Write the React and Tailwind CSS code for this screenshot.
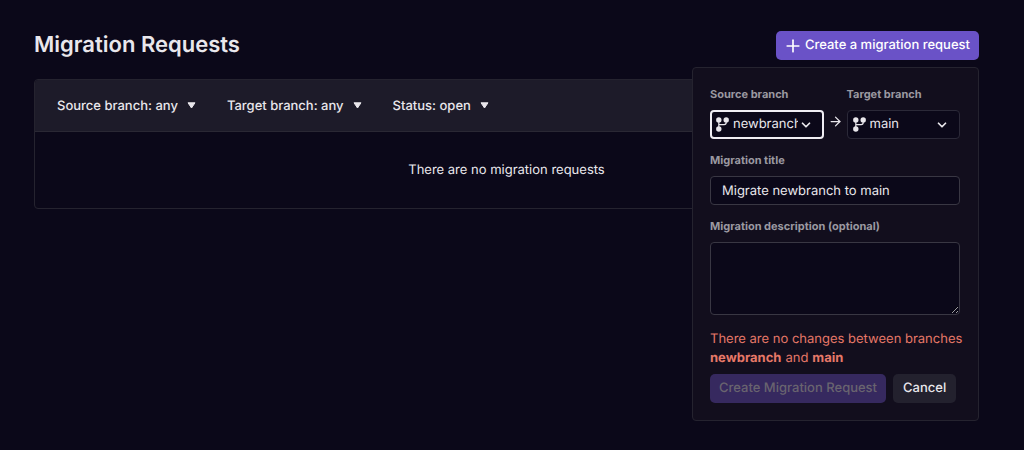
import React, { useState } from 'react';
import { ArrowRight, ChevronDown, Plus } from 'lucide-react';

const BranchIcon = () => (
  <svg width="13" height="15" viewBox="0 0 13 15" className="shrink-0" aria-hidden="true">
    <path d="M2.8 3v9M10.2 3v2.6a2 2 0 0 1-2 2H2.8" fill="none" stroke="currentColor" strokeWidth="1.2" />
    <circle cx="2.8" cy="2.9" r="2.7" fill="currentColor" />
    <circle cx="10.2" cy="2.9" r="2.7" fill="currentColor" />
    <circle cx="2.8" cy="12" r="2.7" fill="currentColor" />
  </svg>
);

const Filter = ({ name, options }) => (
  <div className="relative flex items-center">
    <select
      aria-label={name}
      className="appearance-none field-sizing-content bg-transparent pr-[18px] leading-5 font-medium outline-none cursor-pointer"
    >
      {options.map((option) => (
        <option key={option} className="bg-[#1e1c2a]">{`${name}: ${option}`}</option>
      ))}
    </select>
    <svg width="9" height="7" viewBox="0 0 9 7" className="absolute right-0 pointer-events-none" aria-hidden="true">
      <path d="M1 .8h7L4.5 6z" fill="currentColor" stroke="currentColor" strokeWidth="1" strokeLinejoin="round" />
    </svg>
  </div>
);

const BranchSelect = ({ id, label, value, onChange, active }) => (
  <div className="flex-1 min-w-0">
    <label htmlFor={id} className="block mb-2 text-[11px] leading-4 font-bold text-[#9b99a1]">
      {label}
    </label>
    <div className="relative flex items-center">
      <span className="absolute left-[6px] pointer-events-none">
        <BranchIcon />
      </span>
      <select
        id={id}
        value={value}
        onChange={onChange}
        className={`w-full h-[29px] appearance-none rounded-sm bg-[#0b0819] outline-none ${
          active
            ? 'border-2 border-[#efedf3] pl-[21px] pr-[24px]'
            : 'border border-[#2b2938] pl-[22px] pr-[25px]'
        }`}
      >
        <option>newbranch</option>
        <option>main</option>
      </select>
      <ChevronDown size={14} strokeWidth={3} className="absolute right-[11px] pointer-events-none" />
    </div>
  </div>
);

const MigrationForm = () => {
  const [source, setSource] = useState('newbranch');
  const [target, setTarget] = useState('main');
  const [title, setTitle] = useState('Migrate newbranch to main');

  return (
    <form className="absolute top-full right-0 mt-[7px] w-[287px] rounded border border-[#25232f] bg-[#120e1d] pl-[17px] pr-[18px] pt-[18px] pb-[17px] z-10">
      <div className="flex items-end mb-[13px]">
        <BranchSelect id="source" label="Source branch" value={source} onChange={(e) => setSource(e.target.value)} active />
        <ArrowRight size={15} strokeWidth={2} className="mx-1 mb-[10px] shrink-0" />
        <BranchSelect id="target" label="Target branch" value={target} onChange={(e) => setTarget(e.target.value)} />
      </div>

      <label htmlFor="title" className="block mb-2 text-[11px] leading-4 font-bold text-[#9b99a1]">
        Migration title
      </label>
      <input
        id="title"
        type="text"
        value={title}
        onChange={(e) => setTitle(e.target.value)}
        className="block w-full h-[29px] mb-[13px] px-[11px] rounded-sm border border-[#393743] bg-[#0b0819] outline-none"
      />

      <label htmlFor="description" className="block mb-2 text-[11px] leading-4 font-bold text-[#9b99a1]">
        Migration description (optional)
      </label>
      <textarea
        id="description"
        className="block w-full h-[73px] px-[11px] py-1 rounded-sm border border-[#393743] bg-[#0b0819] outline-none resize scheme-dark"
      />

      <div className="mt-[15px] mb-[6px] -mr-3 leading-[19px] text-[#e67868]">
        <p>There are no changes between branches</p>
        <p className="flex gap-1">
          <b>{source}</b>
          <span>and</span>
          <b>{target}</b>
        </p>
      </div>

      <div className="flex gap-[7px]">
        <button type="submit" disabled className="h-[29px] px-[9px] rounded-[5px] bg-[#36295f] font-medium text-[#69646f] whitespace-nowrap">
          Create Migration Request
        </button>
        <button type="button" className="h-[29px] px-[10px] rounded-[5px] bg-[#23212e] font-medium">
          Cancel
        </button>
      </div>
    </form>
  );
};

const App = () => {
  return (
    <main className="min-h-screen bg-[#0b0819] pl-[34px] pr-[45px] pt-[31px] text-[13px] text-[#e9e7ec] font-['Inter',sans-serif] [text-rendering:geometricPrecision] [&_*]:[text-rendering:inherit]">
      <header className="flex items-start justify-between mb-[19px]">
        <h1 className="text-[22px] leading-7 font-semibold">Migration Requests</h1>
        <div className="relative">
          <button type="button" className="flex items-center gap-[2px] h-[29px] pl-[7px] pr-[9px] rounded-[5px] bg-[#6a52c7] font-medium text-white">
            <Plus size={20} strokeWidth={2} />
            Create a migration request
          </button>
          <MigrationForm />
        </div>
      </header>

      <section className="rounded border border-[#25232f] overflow-hidden">
        <div className="flex items-center gap-[31px] h-[52px] px-[22px] bg-[#1d1b29] border-b border-[#2a2834]">
          <Filter name="Source branch" options={['any', 'newbranch', 'main']} />
          <Filter name="Target branch" options={['any', 'newbranch', 'main']} />
          <Filter name="Status" options={['open', 'any', 'closed']} />
        </div>
        <p className="py-7 text-center leading-5">There are no migration requests</p>
      </section>
    </main>
  );
};

export default App;
